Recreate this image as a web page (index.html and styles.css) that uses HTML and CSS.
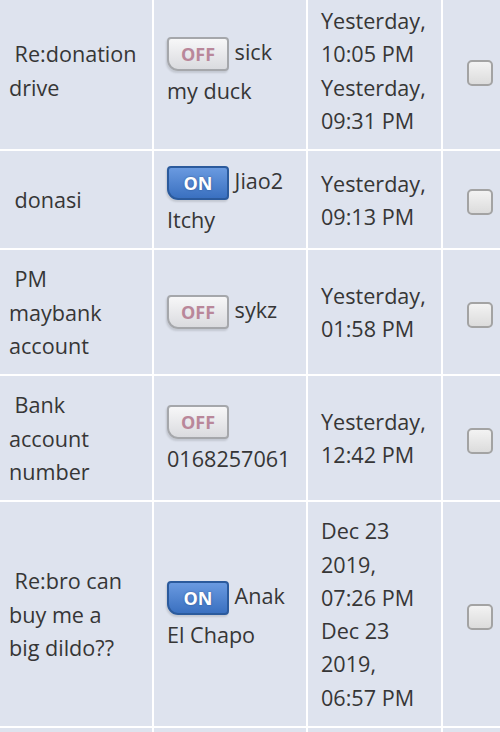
FILE: index.html
```
<!DOCTYPE html>
<html lang="en">

<head>
  <meta charset="UTF-8">
  <meta name="viewport" content="width=device-width, initial-scale=1.0">
  <title>Messages</title>
  <link rel="stylesheet" href="styles.css">
</head>

<body>
  <table class="inbox">
    <tr>
      <td class="subject">&nbsp;Re:donation drive</td>
      <td class="sender"><span class="status off">OFF</span> sick my duck</td>
      <td class="date">Yesterday, 10:05 PM Yesterday, 09:31 PM</td>
      <td class="pick"><span class="check"></span></td>
    </tr>
    <tr>
      <td class="subject">&nbsp;donasi</td>
      <td class="sender"><span class="status on">ON</span> Jiao2 Itchy</td>
      <td class="date">Yesterday, 09:13 PM</td>
      <td class="pick"><span class="check"></span></td>
    </tr>
    <tr>
      <td class="subject">&nbsp;PM maybank account</td>
      <td class="sender"><span class="status off">OFF</span> sykz</td>
      <td class="date">Yesterday, 01:58 PM</td>
      <td class="pick"><span class="check"></span></td>
    </tr>
    <tr>
      <td class="subject">&nbsp;Bank account number</td>
      <td class="sender"><span class="status off">OFF</span> 0168257061</td>
      <td class="date">Yesterday, 12:42 PM</td>
      <td class="pick"><span class="check"></span></td>
    </tr>
    <tr>
      <td class="subject">&nbsp;Re:bro can buy me a big dildo??</td>
      <td class="sender"><span class="status on">ON</span> Anak El Chapo</td>
      <td class="date">Dec 23 2019, 07:26 PM Dec 23 2019, 06:57 PM</td>
      <td class="pick"><span class="check"></span></td>
    </tr>
    <tr>
      <td class="subject">&nbsp;Re:donation</td>
      <td class="sender"><span class="status off">OFF</span> sick</td>
      <td class="date">Yesterday, 08:40 PM</td>
      <td class="pick"><span class="check"></span></td>
    </tr>
  </table>
</body>

</html>
```
FILE: styles.css
```
body {
  margin: 0;
  padding: 0;
  background: #ffffff;
  overflow: hidden;
  font-family: "Open Sans", "DejaVu Sans", sans-serif;
  font-size: 21.6px;
  line-height: 33.3px;
  color: #363636;
}

.inbox {
  margin: -10px 0 0 -6px;
  width: 525px;
  table-layout: fixed;
  border-collapse: separate;
  border-spacing: 2px;
  background: #ffffff;
}

.inbox td {
  box-sizing: border-box;
  background: #dee3ee;
  padding: 12px 8px 12px 13px;
  vertical-align: middle;
}

.subject {
  width: 156px;
}

.inbox td.subject {
  padding-right: 15px;
}

.sender {
  width: 152px;
}

.date {
  width: 133px;
}

.pick {
  width: 74px;
  text-align: center;
}

.inbox td.pick {
  padding: 0;
}

.status {
  display: inline-block;
  box-sizing: border-box;
  width: 62px;
  height: 34px;
  margin: 3px 0 3px;
  font-size: 18px;
  font-weight: bold;
  line-height: 30px;
  text-align: center;
  vertical-align: middle;
  border: 2px solid;
  border-radius: 4px 4px 4px 11px;
  box-shadow: -1px 2px 2px rgba(0,0,0,0.12);
}

.off {
  color: #b9879a;
  background: linear-gradient(#f7f7f8, #dadbdf);
  border-color: #a5a7ab;
}

.on {
  color: #ffffff;
  background: linear-gradient(#6a9ae0, #3a70c0);
  border-color: #2b5a9c;
  text-shadow: 0 0 2px rgba(20,50,100,0.6);
}

.check {
  display: inline-block;
  box-sizing: border-box;
  width: 26px;
  height: 26px;
  vertical-align: middle;
  border: 2px solid #a3a3a3;
  border-radius: 5px;
  background: linear-gradient(#f3f3f3, #dcdcdc);
}
```
